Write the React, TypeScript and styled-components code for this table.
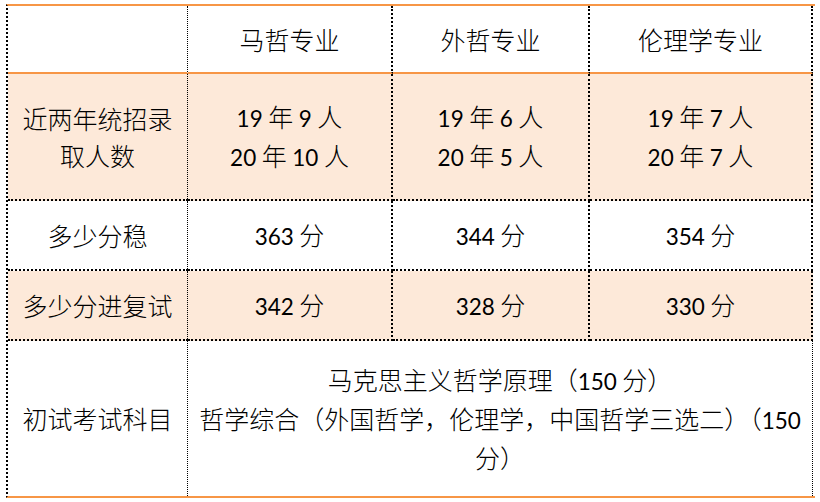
import React from "react";
import styled, { createGlobalStyle } from "styled-components";

const ORANGE = "#F79646";
const PEACH = "#FDE9D9";

const Global = createGlobalStyle`
  html, body { margin: 0; padding: 0; background: #ffffff; }
  body { font-family: "Noto Sans CJK SC", "Noto Sans", sans-serif; }
`;

const Page = styled.div`
  padding: 4px 0 0 6px;
`;

const Table = styled.div`
  display: grid;
  width: 809px;
  box-sizing: border-box;
  grid-template-columns: 180px 205px 197px 223px;
  grid-template-rows: 68px 127px 70px 70px 155px;
  border-top: 2px solid ${ORANGE};
  border-bottom: 2px solid ${ORANGE};
  border-left: 2px dotted #000;
`;

type RowKind = "head" | "mid" | "last";

const Cell = styled.div<{ $shade?: boolean; $row: RowKind; $thin?: boolean; $span?: number }>`
  box-sizing: border-box;
  display: flex;
  flex-direction: column;
  align-items: center;
  justify-content: center;
  text-align: center;
  background: ${(p) => (p.$shade ? PEACH : "#ffffff")};
  color: #000;
  font-family: "Noto Sans CJK SC", "Noto Sans", sans-serif;
  font-weight: 300;
  font-size: 25px;
  line-height: 37px;
  grid-column: ${(p) => (p.$span ? `span ${p.$span}` : "auto")};
  border-right: ${(p) => (p.$thin ? "1px" : "2px")} dotted #000;
  border-bottom: ${(p) =>
    p.$row === "head" ? `2px solid ${ORANGE}` : p.$row === "mid" ? "2px dotted #000" : "none"};
  padding-top: ${(p) => (p.$row === "head" ? "1px" : "0")};
`;

const Line = styled.div`
  white-space: nowrap;
`;

const Num = styled.span`
  font-family: "Lato", "Noto Sans", sans-serif;
  font-weight: 400;
  font-size: 22.5px;
`;

const majors = ["马哲专业", "外哲专业", "伦理学专业"];
const admit = [
  [["19", "9"], ["20", "10"]],
  [["19", "6"], ["20", "5"]],
  [["19", "7"], ["20", "7"]],
];
const stable = ["363", "344", "354"];
const retest = ["342", "328", "330"];

export default function App() {
  return (
    <>
      <Global />
      <Page>
        <Table>
          <Cell $row="head" $thin />
          {majors.map((m, i) => (
            <Cell key={m} $row="head" $thin={false}>
              <Line>{m}</Line>
            </Cell>
          ))}

          <Cell $row="mid" $shade $thin>
            <Line>近两年统招录</Line>
            <Line>取人数</Line>
          </Cell>
          {admit.map((a, i) => (
            <Cell key={i} $row="mid" $shade>
              {a.map(([y, n]) => (
                <Line key={y}>
                  <Num>{y}</Num> 年 <Num>{n}</Num> 人
                </Line>
              ))}
            </Cell>
          ))}

          <Cell $row="mid" $thin>
            <Line>多少分稳</Line>
          </Cell>
          {stable.map((s) => (
            <Cell key={s} $row="mid">
              <Line>
                <Num>{s}</Num> 分
              </Line>
            </Cell>
          ))}

          <Cell $row="mid" $shade $thin>
            <Line>多少分进复试</Line>
          </Cell>
          {retest.map((s) => (
            <Cell key={s} $row="mid" $shade>
              <Line>
                <Num>{s}</Num> 分
              </Line>
            </Cell>
          ))}

          <Cell $row="last" $thin>
            <Line>初试考试科目</Line>
          </Cell>
          <Cell $row="last" $span={3} $thin>
            <Line>
              马克思主义哲学原理（<Num>150</Num> 分）
            </Line>
            <Line>
              哲学综合（外国哲学，伦理学，中国哲学三选二）（<Num>150</Num>
            </Line>
            <Line>分）</Line>
          </Cell>
        </Table>
      </Page>
    </>
  );
}
